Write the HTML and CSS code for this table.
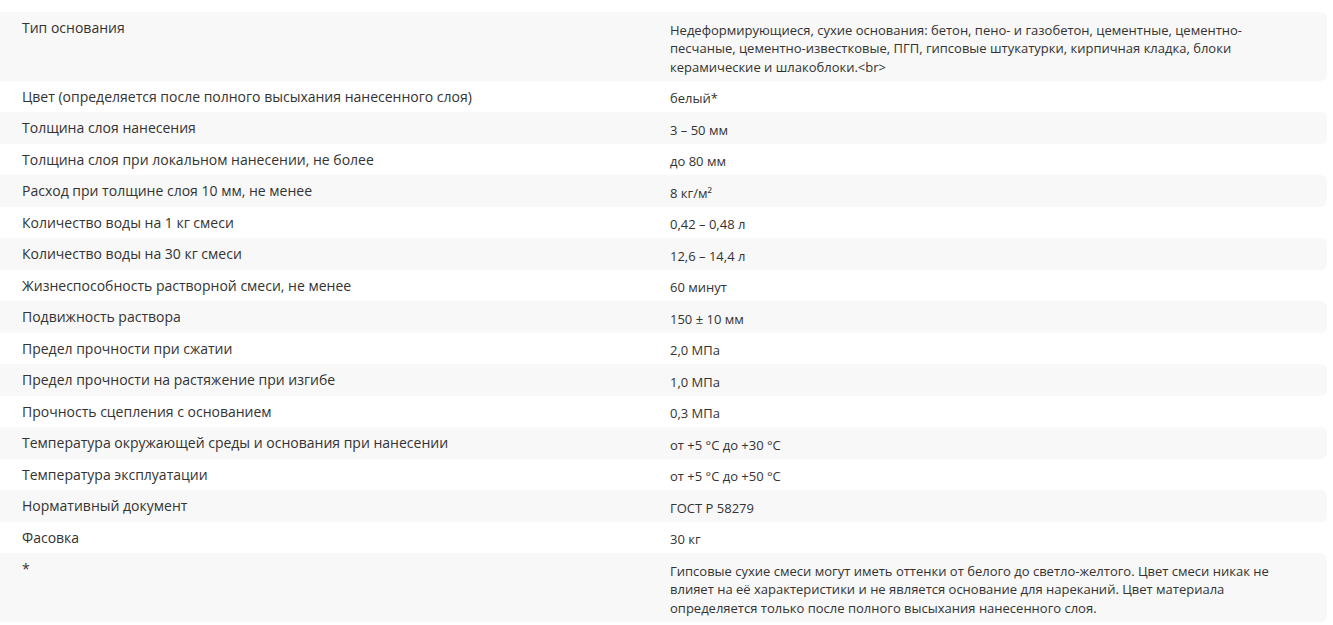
FILE: index.html
```html
<!DOCTYPE html>
<html lang="ru">
<head>
<meta charset="utf-8">
<link rel="stylesheet" href="styles.css">
</head>
<body>
<div class="specs">
  <div class="row"><div class="name">Тип основания</div><div class="val">Недеформирующиеся, сухие основания: бетон, пено- и газобетон, цементные, цементно-песчаные, цементно-известковые, ПГП, гипсовые штукатурки, кирпичная кладка, блоки керамические и шлакоблоки.&lt;br&gt;</div></div>
  <div class="row"><div class="name">Цвет (определяется после полного высыхания нанесенного слоя)</div><div class="val">белый*</div></div>
  <div class="row"><div class="name">Толщина слоя нанесения</div><div class="val">3 – 50 мм</div></div>
  <div class="row"><div class="name">Толщина слоя при локальном нанесении, не более</div><div class="val">до 80 мм</div></div>
  <div class="row"><div class="name">Расход при толщине слоя 10 мм, не менее</div><div class="val">8 кг/м²</div></div>
  <div class="row"><div class="name">Количество воды на 1 кг смеси</div><div class="val">0,42 – 0,48 л</div></div>
  <div class="row"><div class="name">Количество воды на 30 кг смеси</div><div class="val">12,6 – 14,4 л</div></div>
  <div class="row"><div class="name">Жизнеспособность растворной смеси, не менее</div><div class="val">60 минут</div></div>
  <div class="row"><div class="name">Подвижность раствора</div><div class="val">150 ± 10 мм</div></div>
  <div class="row"><div class="name">Предел прочности при сжатии</div><div class="val">2,0 МПа</div></div>
  <div class="row"><div class="name">Предел прочности на растяжение при изгибе</div><div class="val">1,0 МПа</div></div>
  <div class="row"><div class="name">Прочность сцепления с основанием</div><div class="val">0,3 МПа</div></div>
  <div class="row"><div class="name">Температура окружающей среды и основания при нанесении</div><div class="val">от +5 °С до +30 °С</div></div>
  <div class="row"><div class="name">Температура эксплуатации</div><div class="val">от +5 °С до +50 °С</div></div>
  <div class="row"><div class="name">Нормативный документ</div><div class="val">ГОСТ Р 58279</div></div>
  <div class="row"><div class="name">Фасовка</div><div class="val">30 кг</div></div>
  <div class="row"><div class="name">*</div><div class="val">Гипсовые сухие смеси могут иметь оттенки от белого до светло-желтого. Цвет смеси никак не влияет на её характеристики и не является основание для нареканий. Цвет материала определяется только после полного высыхания нанесенного слоя.</div></div>
</div>
</body>
</html>
```

FILE: styles.css
```css
html, body {
  margin: 0;
  padding: 0;
  background: #fff;
}
body {
  font-family: "Open Sans", "Liberation Sans", sans-serif;
  color: #333;
}
.specs {
  width: 1327px;
  padding-top: 12px;
  display: flex;
  flex-direction: column;
}
.row {
  display: grid;
  grid-template-columns: 648px 1fr;
  align-items: start;
  border-radius: 0 6px 6px 0;
}
.row:nth-child(odd) {
  background: #f8f8f8;
}
.name {
  padding: 6px 0 6px 22px;
  font-size: 14px;
  line-height: 19.5px;
}
.val {
  padding: 8.5px 22px 4.5px 22px;
  font-size: 13px;
  line-height: 18.5px;
}
```
